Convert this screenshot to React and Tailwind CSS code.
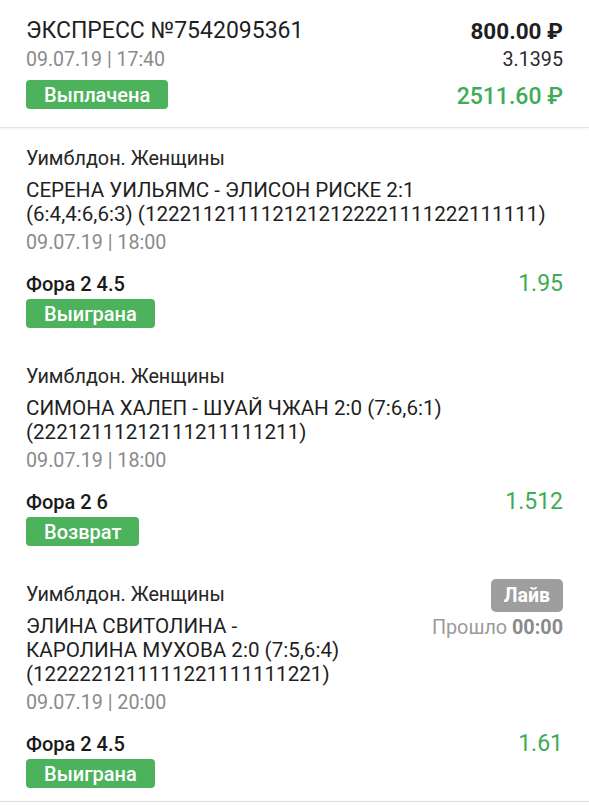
import React from "react";

const matches = [
  {
    id: 1,
    league: "Уимблдон. Женщины",
    title: ["СЕРЕНА УИЛЬЯМС - ЭЛИСОН РИСКЕ 2:1", "(6:4,4:6,6:3) (1222112111121212122221111222111111)"],
    date: "09.07.19 | 18:00",
    bet: "Фора 2 4.5",
    odds: "1.95",
    status: "Выиграна",
  },
  {
    id: 2,
    league: "Уимблдон. Женщины",
    title: ["СИМОНА ХАЛЕП - ШУАЙ ЧЖАН 2:0 (7:6,6:1)", "(22212111212111211111211)"],
    date: "09.07.19 | 18:00",
    bet: "Фора 2 6",
    odds: "1.512",
    status: "Возврат",
  },
  {
    id: 3,
    league: "Уимблдон. Женщины",
    title: ["ЭЛИНА СВИТОЛИНА -", "КАРОЛИНА МУХОВА 2:0 (7:5,6:4)", "(1222221211111221111111221)"],
    date: "09.07.19 | 20:00",
    bet: "Фора 2 4.5",
    odds: "1.61",
    status: "Выиграна",
    live: true,
  },
];

function StatusBadge({ children }) {
  return (
    <span className="inline-flex h-[29px] items-center rounded-[4px] bg-[#4cb35c] px-[18px] text-[20px] font-medium text-white">
      {children}
    </span>
  );
}

function MatchItem({ match, last }) {
  return (
    <div className={last ? "px-[26px] pt-[19px] pb-[13px]" : "px-[26px] pt-[19px] pb-[18px]"}>
      <div className="flex justify-between">
        <div>
          <div className="text-[19.8px] leading-[24px] text-[#262626]">{match.league}</div>
          <div className="mt-[7px] text-[20.6px] leading-[24px] text-[#1f1f1f]">
            {match.title.map((line, i) => (
              <div key={i}>{line}</div>
            ))}
          </div>
          <div className="mt-[5px] text-[19.7px] leading-[24px] text-[#8a8a8a]">{match.date}</div>
        </div>
        {match.live && (
          <div className="flex flex-col items-end">
            <span className="mt-[-4px] inline-flex h-[33px] items-center rounded-[5px] bg-[#9e9e9e] px-[13px] text-[19.5px] font-bold text-white">
              Лайв
            </span>
            <div className="mt-[4px] text-[19.8px] leading-[24px] text-[#9a9a9a]">
              Прошло <span className="font-bold text-[#8a8a8a]">00:00</span>
            </div>
          </div>
        )}
      </div>
      <div className="mt-[17px] flex items-center justify-between">
        <span className="text-[20px] font-medium leading-[24px] text-[#1a1a1a]">{match.bet}</span>
        <span className="text-[23px] leading-[24px] text-[#3fab56]">{match.odds}</span>
      </div>
      <div className="mt-[3px]">
        <StatusBadge>{match.status}</StatusBadge>
      </div>
    </div>
  );
}

export default function App() {
  return (
    <div className="min-h-[806px] bg-white font-['Roboto',sans-serif]">
      <div className="flex justify-between border-b border-[#e3e3e3] px-[26px] pt-[18px] pb-[17px] shadow-[0_1px_3px_rgba(0,0,0,0.06)]">
        <div>
          <div className="text-[23px] leading-[26px] text-[#1f1f1f]">ЭКСПРЕСС №7542095361</div>
          <div className="mt-[4px] text-[19.5px] leading-[24px] text-[#8a8a8a]">09.07.19 | 17:40</div>
          <div className="mt-[8px]">
            <StatusBadge>Выплачена</StatusBadge>
          </div>
        </div>
        <div className="flex flex-col items-end">
          <div className="text-[22.5px] font-bold leading-[26px] text-[#1f1f1f]">800.00 ₽</div>
          <div className="mt-[4px] text-[19.7px] leading-[24px] text-[#2b2b2b]">3.1395</div>
          <div className="mt-[12px] text-[23px] font-medium leading-[26px] text-[#3fab56]">2511.60 ₽</div>
        </div>
      </div>
      <div className="border-b border-[#dcdcdc]">
        {matches.map((m, i) => (
          <MatchItem key={m.id} match={m} last={i === matches.length - 1} />
        ))}
      </div>
    </div>
  );
}
